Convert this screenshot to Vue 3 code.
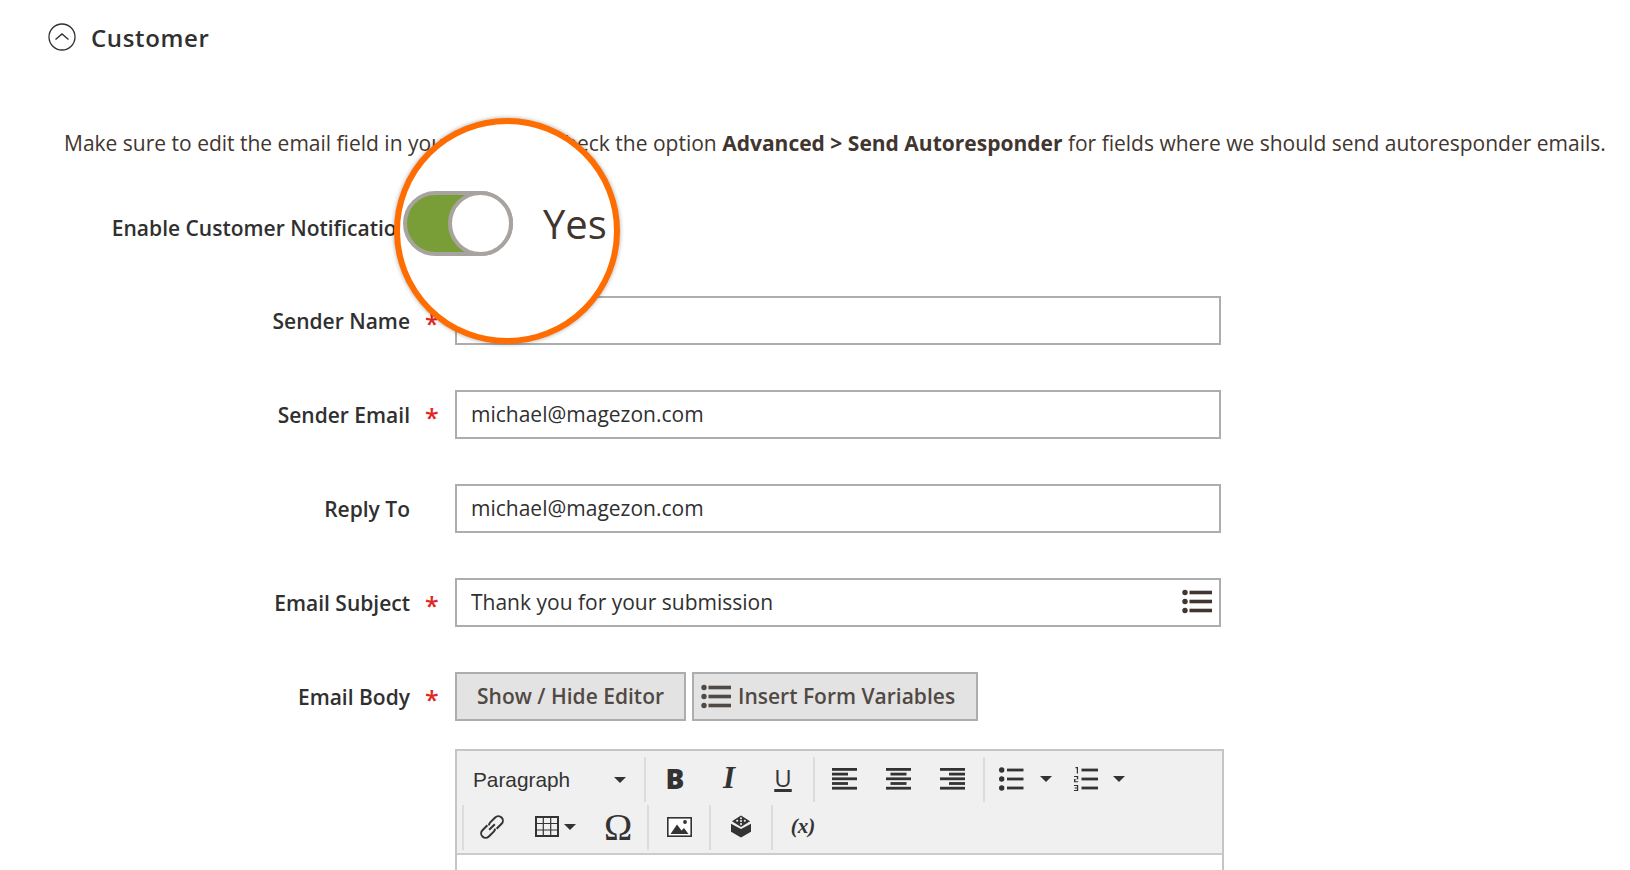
<script setup>
const fields = [
  { label: "Sender Name", required: true, value: "" },
  { label: "Sender Email", required: true, value: "michael@magezon.com" },
  { label: "Reply To", required: false, value: "michael@magezon.com" },
];
</script>

<template>
  <div class="page">
    <div class="section-head">
      <svg class="collapse" width="28" height="28" viewBox="0 0 28 28">
        <circle cx="14" cy="14" r="13" fill="none" stroke="#303030" stroke-width="1.3" />
        <path d="M7.5 16.5 14 11l6.5 5.5" fill="none" stroke="#303030" stroke-width="1.4" />
      </svg>
      <span>Customer</span>
    </div>

    <p class="intro">
      Make sure to edit the email field in your form and check the option
      <b>Advanced &gt; Send Autoresponder</b> for fields where we should send
      autoresponder emails.
    </p>

    <div class="form">
      <div class="row first-row">
        <label class="label">Enable Customer Notification</label>
        <span class="star"></span>
        <div class="control"></div>
      </div>

      <div v-for="field in fields" :key="field.label" class="row">
        <label class="label">{{ field.label }}</label>
        <span class="star">{{ field.required ? "*" : "" }}</span>
        <div class="control">
          <input class="input" type="text" :value="field.value" />
        </div>
      </div>

      <div class="row">
        <label class="label">Email Subject</label>
        <span class="star">*</span>
        <div class="control input-wrap">
          <input class="input" type="text" value="Thank you for your submission" />
          <svg class="input-icon" width="30" height="25" viewBox="0 0 30 25" fill="#41362f">
            <circle cx="3" cy="3.5" r="2.7" /><rect x="7.5" y="1.7" width="22.5" height="3.6" />
            <circle cx="3" cy="12.5" r="2.7" /><rect x="7.5" y="10.7" width="22.5" height="3.6" />
            <circle cx="3" cy="21.5" r="2.7" /><rect x="7.5" y="19.7" width="22.5" height="3.6" />
          </svg>
        </div>
      </div>

      <div class="row body-row">
        <label class="label">Email Body</label>
        <span class="star">*</span>
        <div class="control">
          <div class="actions">
            <button class="action">Show / Hide Editor</button>
            <button class="action with-icon">
              <svg width="30" height="25" viewBox="0 0 30 25" fill="#514943">
                <circle cx="3" cy="3.5" r="2.7" /><rect x="7.5" y="1.7" width="22.5" height="3.6" />
                <circle cx="3" cy="12.5" r="2.7" /><rect x="7.5" y="10.7" width="22.5" height="3.6" />
                <circle cx="3" cy="21.5" r="2.7" /><rect x="7.5" y="19.7" width="22.5" height="3.6" />
              </svg>
              Insert Form Variables
            </button>
          </div>

          <div class="editor">
            <div class="toolbar">
              <div class="tool-row">
                <div class="group format-group">
                  <span class="format">Paragraph</span>
                  <i class="caret"></i>
                </div>
                <div class="group style-group">
                  <span class="tool tool-b">B</span>
                  <span class="tool tool-i">I</span>
                  <span class="tool tool-u">U</span>
                </div>
                <div class="group align-group">
                  <span class="tool">
                    <svg width="25" height="22" viewBox="0 0 25 22" fill="#333"><rect width="25" height="2.8" /><rect y="4.7" width="16" height="2.8" /><rect y="9.4" width="25" height="2.8" /><rect y="14.1" width="16" height="2.8" /><rect y="18.800" width="25" height="2.800" /></svg>
                  </span>
                  <span class="tool">
                    <svg width="25" height="22" viewBox="0 0 25 22" fill="#333"><rect width="25" height="2.800" /><rect x="4.500" y="4.700" width="16" height="2.800" /><rect y="9.400" width="25" height="2.800" /><rect x="4.500" y="14.100" width="16" height="2.800" /><rect y="18.800" width="25" height="2.800" /></svg>
                  </span>
                  <span class="tool">
                    <svg width="25" height="22" viewBox="0 0 25 22" fill="#333"><rect width="25" height="2.800" /><rect x="9" y="4.700" width="16" height="2.800" /><rect y="9.400" width="25" height="2.800" /><rect x="9" y="14.100" width="16" height="2.800" /><rect y="18.800" width="25" height="2.800" /></svg>
                  </span>
                </div>
                <div class="group last-group">
                  <span class="tool list-tool">
                    <svg width="25" height="24" viewBox="0 0 25 24" fill="#333"><circle cx="2.700" cy="3" r="2.700" /><rect x="8" y="1.600" width="16.500" height="2.800" /><circle cx="2.700" cy="12" r="2.700" /><rect x="8" y="10.600" width="16.500" height="2.800" /><circle cx="2.700" cy="21" r="2.700" /><rect x="8" y="19.600" width="16.500" height="2.800" /></svg>
                    <i class="caret"></i>
                  </span>
                  <span class="tool list-tool num-tool">
                    <svg width="24" height="24" viewBox="0 0 24 24" fill="#333"><path d="M1.500 0H4v6.500H2.800V1.300H1.500zM0 9h4.200v3.200H1.400v2h2.800v1H0v-3.200h2.800v-2H0zM0 18h4.200v6H0v-1h2.900v-1.500H.6v-1h2.300V19H0z" /><rect x="7.500" y="1.600" width="16.500" height="2.800" /><rect x="7.500" y="10.600" width="16.500" height="2.800" /><rect x="7.500" y="19.600" width="16.500" height="2.800" /></svg>
                    <i class="caret"></i>
                  </span>
                </div>
              </div>

              <div class="tool-row second">
                <div class="group insert-group">
                  <span class="tool link-tool">
                    <svg width="26" height="26" viewBox="0 0 26 26" fill="none" stroke="#333" stroke-width="2">
                      <g transform="rotate(-45 13 13)">
                        <path d="M11 8.500H4a4.500 4.500 0 0 0 0 9h7a4.500 4.500 0 0 0 3-1.200" />
                        <path d="M15 17.500h7a4.500 4.500 0 0 0 0-9h-7a4.500 4.500 0 0 0-3 1.200" />
                        <path d="M9 13h8" />
                      </g>
                    </svg>
                  </span>
                  <span class="tool table-tool">
                    <svg width="24" height="21" viewBox="0 0 24 21" fill="none" stroke="#333">
                      <rect x="1" y="1" width="22" height="19" stroke-width="2" />
                      <path d="M1 7.500h22M1 14h22M8.300 1v19M15.700 1v19" stroke-width="1.200" />
                    </svg>
                    <i class="caret"></i>
                  </span>
                  <span class="tool omega">Ω</span>
                </div>
                <div class="group single">
                  <span class="tool">
                    <svg width="25" height="20" viewBox="0 0 25 20">
                      <rect x=".8" y=".8" width="23.400" height="18.400" fill="#fff" stroke="#333" stroke-width="1.600" />
                      <path d="M3.500 17 10 7.500l4.500 6 2.500-2.500 4.500 6z" fill="#333" />
                      <circle cx="18" cy="5" r="1.900" fill="#333" />
                    </svg>
                  </span>
                </div>
                <div class="group single">
                  <span class="tool">
                    <svg width="20" height="23" viewBox="0 0 21 23">
                      <path d="M0 8.500 10.500 14 21 8.500V17l-10.500 6L0 17z" fill="#333" />
                      <path d="M10.500 0 20 6 10.500 12 1 6z" fill="#333" />
                      <g fill="#eee"><circle cx="10.500" cy="2.800" r="1.100" /><circle cx="6.500" cy="5.500" r="1.100" /><circle cx="10.500" cy="5.800" r="1.100" /><circle cx="14.500" cy="5.500" r="1.100" /><circle cx="10.500" cy="9" r="1.100" /></g>
                    </svg>
                  </span>
                </div>
                <div class="group single">
                  <span class="tool tool-var">(x)</span>
                </div>
              </div>
            </div>
            <div class="editor-body"></div>
          </div>
        </div>
      </div>
    </div>

    <!-- zoomed callout sitting over the form -->
    <div class="magnifier">
      <div class="switch"><span class="knob"></span></div>
      <span class="switch-text">Yes</span>
    </div>
  </div>
</template>

<style>
html,
body {
  margin: 0;
  background: #fff;
}
</style>

<style scoped>
.page {
  position: relative;
  width: 1630px;
  height: 870px;
  overflow: hidden;
  background: #fff;
  font-family: "Open Sans", sans-serif;
  color: #41362f;
}

.section-head {
  display: flex;
  align-items: center;
  gap: 15px;
  height: 74px;
  padding-bottom: 2px;
  padding-left: 48px;
  font-size: 24px;
  font-weight: 600;
  color: #303030;
  letter-spacing: 0.65px;
}

.collapse {
  flex-shrink: 0;
}

.intro {
  margin: 0;
  padding: 52px 0 0 64px;
  font-size: 21px;
  line-height: 30px;
  white-space: nowrap;
}

.intro b {
  font-weight: 700;
}

.form {
  display: flex;
  flex-direction: column;
  gap: 45px;
  margin-top: 45px;
}

.row {
  display: flex;
  align-items: flex-start;
  height: 49px;
}

.first-row {
  height: 48px;
}

.label {
  width: 410px;
  text-align: right;
  font-size: 21px;
  font-weight: 600;
  line-height: 51px;
  color: #303030;
}

.star {
  width: 45px;
  padding-left: 15px;
  box-sizing: border-box;
  color: #e22626;
  font-size: 25px;
  font-weight: 600;
  line-height: 55px;
}

.control {
  width: 766px;
}

.input-wrap {
  position: relative;
}

.input {
  display: block;
  width: 100%;
  height: 49px;
  box-sizing: border-box;
  padding: 0 14px 2px;
  border: 2px solid #adadad;
  outline: none;
  font-family: inherit;
  font-size: 21px;
  color: #303030;
}

.input-icon {
  position: absolute;
  top: 11px;
  right: 9px;
}

.actions {
  display: flex;
  gap: 6px;
}

.action {
  display: flex;
  align-items: center;
  gap: 7px;
  height: 49px;
  box-sizing: border-box;
  padding: 0 20px 1px;
  border: 2px solid #adadad;
  background: #e3e3e3;
  font-family: inherit;
  font-size: 21px;
  font-weight: 600;
  color: #514943;
}

.with-icon {
  padding: 0 21px 1px 7px;
}

.editor {
  width: 769px;
  margin-top: 28px;
  box-sizing: border-box;
  border: 2px solid #c5c5c5;
  border-bottom: none;
}

.toolbar {
  height: 104px;
  box-sizing: border-box;
  padding-top: 6px;
  background: #f0f0f0;
  border-bottom: 2px solid #ccc;
}

.tool-row {
  display: flex;
  height: 45px;
}

.second {
  margin-top: 3px;
  padding-left: 5px;
}

.group {
  display: flex;
  align-items: center;
  padding: 0 3px;
  border-right: 2px solid #dcdcdc;
}

.format-group {
  width: 189px;
  box-sizing: border-box;
  justify-content: space-between;
  padding: 0 18px 0 16px;
}

.style-group {
  padding-left: 2px;
}

.align-group {
  padding: 0 4px 0 2px;
}

.format {
  font-family: "Liberation Sans", sans-serif;
  font-size: 20.8px;
  color: #333;
}

.last-group {
  padding: 0;
  border-right: none;
}

.tool {
  display: flex;
  align-items: center;
  justify-content: center;
  width: 54px;
  height: 45px;
  padding-bottom: 2px;
  box-sizing: border-box;
  color: #333;
}

.tool-b {
  font-size: 28px;
  font-weight: 800;
  padding-bottom: 3px;
}

.tool-i {
  font-family: "Liberation Serif", serif;
  font-size: 31px;
  font-style: italic;
  font-weight: 700;
  padding-bottom: 3px;
}

.tool-u {
  font-size: 24px;
  text-decoration: underline;
  text-decoration-thickness: 3px;
  text-underline-offset: 2px;
  padding-bottom: 5px;
}

.list-tool {
  width: 75px;
  gap: 16px;
  justify-content: flex-start;
  padding-left: 14px;
}

.num-tool {
  gap: 15px;
}

.caret {
  display: block;
  width: 0;
  height: 0;
  border-left: 6px solid transparent;
  border-right: 6px solid transparent;
  border-top: 6px solid #333;
}

.insert-group {
  border-left: 2px solid #dcdcdc;
  width: 183px;
  padding: 0;
}

.link-tool {
  width: 56px;
}

.table-tool {
  width: 70px;
  gap: 5px;
}

.omega {
  font-family: "Liberation Serif", serif;
  font-size: 38px;
  width: 54px;
  padding-left: 2px;
}

.single {
  width: 60px;
  justify-content: center;
  padding: 0;
}

.single:last-child {
  border-right: none;
}

.tool-var {
  font-family: "Liberation Serif", serif;
  font-size: 21px;
  font-style: italic;
  font-weight: 700;
}

.editor-body {
  height: 60px;
}

.magnifier {
  position: absolute;
  left: 394px;
  top: 118px;
  display: flex;
  align-items: center;
  width: 226px;
  height: 226px;
  box-sizing: border-box;
  padding: 0 0 15px 3px;
  gap: 30px;
  border: 6px solid #ff6d00;
  border-radius: 50%;
  background: #fff;
  box-shadow: 0 0 4px rgba(0, 0, 0, 0.35);
}

.switch {
  position: relative;
  flex-shrink: 0;
  width: 110px;
  height: 65px;
  box-sizing: border-box;
  border: 4px solid #a8a39e;
  border-radius: 33px;
  background: linear-gradient(90deg, #7a9e37 60%, #fff 60%);
}

.knob {
  position: absolute;
  top: -4px;
  right: -4px;
  width: 65px;
  height: 65px;
  box-sizing: border-box;
  border: 4px solid #a8a39e;
  border-radius: 50%;
  background: #fff;
}

.switch-text {
  font-size: 40px;
  line-height: 1;
  color: #41362f;
}
</style>
